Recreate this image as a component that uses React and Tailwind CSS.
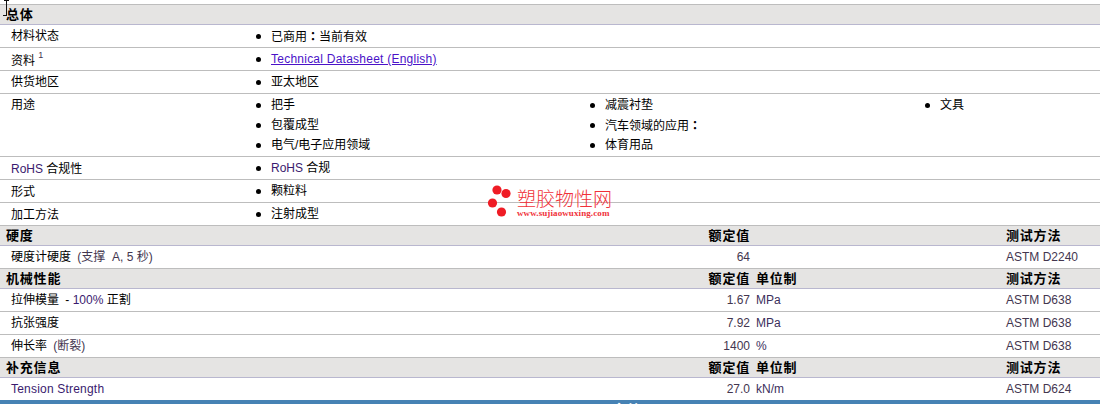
const FONT = "font-['Liberation_Sans','Noto_Sans_CJK_SC',sans-serif]";

function Bullet({ children }) {
  return (
    <div className="flex h-5 items-center">
      <span className="h-[5px] w-[5px] rounded-full bg-black mr-[10px] shrink-0" />
      <span>{children}</span>
    </div>
  );
}

function Section({ title, value, unit, method, first }) {
  return (
    <div className={`flex items-center border-b border-b-[#b9b7cf] bg-[#e5e4e3] text-[13px] font-bold tracking-[0.8px] text-black ${first ? "h-[21px] border-t border-t-[#bdbdbd]" : "h-[20px]"}`}>
      <div className="w-[650px] pl-[6px]">{title}</div>
      <div className="w-[100px] text-right">{value}</div>
      <div className="w-[256px] pl-[6px]">{unit}</div>
      <div>{method}</div>
    </div>
  );
}

function InfoRow({ label, children, className = "h-[23px]", labelPad = "pt-[1px]" }) {
  return (
    <div className={`flex border-b border-[#bdbdbd] ${className}`}>
      <div className={`w-[252px] pl-[11px] leading-5 shrink-0 ${labelPad}`}>{label}</div>
      <div className="pl-[4px] pt-[1px] flex-1">{children}</div>
    </div>
  );
}

function DataRow({ label, value, unit, method, last }) {
  return (
    <div className={`flex items-center text-[12px] ${last ? "h-[22px]" : "h-[23px] border-b border-[#bdbdbd]"}`}>
      <div className="w-[650px] pl-[11px]">{label}</div>
      <div className="w-[100px] text-right text-[#43364f]">{value}</div>
      <div className="w-[256px] pl-[6px] text-[#3b2f5c]">{unit}</div>
      <div className="text-[#43364f]">{method}</div>
    </div>
  );
}

const P = ({ children }) => <span className="text-[#3a1a6e]">{children}</span>;
const Colon = () => <span className="font-['Noto_Sans_CJK_TC',sans-serif] font-bold">：</span>;

export default function App() {
  return (
    <div className={`relative h-[404px] w-[1100px] overflow-hidden bg-white pt-[4px] text-[12px] text-black ${FONT}`}>
      <Section first title="总体" />
      <InfoRow label="材料状态"><Bullet>已商用<Colon />当前有效</Bullet></InfoRow>
      <InfoRow labelPad="pt-[3px]" label={<span>资料 <sup className="text-[9px] text-[#43364f] -top-[7px]">1</sup></span>}>
        <Bullet><a href="#" className="text-[#4a12c8] underline tracking-[0.24px]">Technical Datasheet (English)</a></Bullet>
      </InfoRow>
      <InfoRow label="供货地区"><Bullet>亚太地区</Bullet></InfoRow>
      <InfoRow label="用途" className="h-[63px]">
        <div className="flex">
          <div className="w-[334px]">
            <Bullet>把手</Bullet><Bullet>包覆成型</Bullet><Bullet>电气/电子应用领域</Bullet>
          </div>
          <div className="w-[335px]">
            <Bullet>减震衬垫</Bullet><Bullet>汽车领域的应用<Colon /></Bullet><Bullet>体育用品</Bullet>
          </div>
          <div>
            <Bullet>文具</Bullet>
          </div>
        </div>
      </InfoRow>
      <InfoRow labelPad="pt-[2px]" label={<span><P>RoHS</P> 合规性</span>}><Bullet><P>RoHS</P> 合规</Bullet></InfoRow>
      <InfoRow labelPad="pt-[2px]" label="形式"><Bullet>颗粒料</Bullet></InfoRow>
      <InfoRow labelPad="pt-[2px]" label="加工方法"><Bullet>注射成型</Bullet></InfoRow>
      <Section title="硬度" value="额定值" method="测试方法" />
      <DataRow label={<span>硬度计硬度 <span className="ml-[3px] text-[#43364f]">(支撑 &nbsp;A, 5 秒)</span></span>} value="64" method="ASTM D2240" />
      <Section title="机械性能" value="额定值" unit="单位制" method="测试方法" />
      <DataRow label={<span>拉伸模量 <span className="ml-[3px]">- <P>100%</P> 正割</span></span>} value="1.67" unit="MPa" method="ASTM D638" />
      <DataRow label="抗张强度" value="7.92" unit="MPa" method="ASTM D638" />
      <DataRow label={<span>伸长率 <span className="ml-[3px] text-[#43364f]">(断裂)</span></span>} value="1400" unit="%" method="ASTM D638" />
      <Section title="补充信息" value="额定值" unit="单位制" method="测试方法" />
      <DataRow last label={<span className="tracking-[0.2px]"><P>Tension Strength</P></span>} value="27.0" unit="kN/m" method="ASTM D624" />
      <div className="h-5 bg-[#4682b4] pl-[614px] text-[13px] font-bold leading-[19px] tracking-[1px] text-white">备注</div>

      {/* text cursor */}
      <svg className="absolute left-0 top-0" width="12" height="18" viewBox="0 0 12 18">
        <path d="M4 0.5H9M6.5 0V15M3 15.5H7" stroke="#111" strokeWidth="1" fill="none" />
      </svg>

      {/* watermark */}
      <div className="absolute left-[487px] top-[183px] flex items-start">
        <svg width="30" height="36" viewBox="0 0 30 36">
          <circle cx="10" cy="7" r="4.6" fill="#ef1c25" />
          <circle cx="19" cy="10.5" r="4.6" fill="#ef1c25" />
          <circle cx="5.5" cy="20" r="4.6" fill="#ef1c25" />
          <circle cx="14.5" cy="29" r="4.6" fill="#ef1c25" />
        </svg>
        <div className="text-[#f0313a]">
          <div className="mt-[5px] text-[19px] leading-[20px] font-['Noto_Sans_CJK_SC',sans-serif] font-light">塑胶物性网</div>
          <div className="text-[9px] font-bold leading-[11px] tracking-[0.1px] font-['Liberation_Serif',serif]">www.sujiaowuxing.com</div>
        </div>
      </div>
    </div>
  );
}
